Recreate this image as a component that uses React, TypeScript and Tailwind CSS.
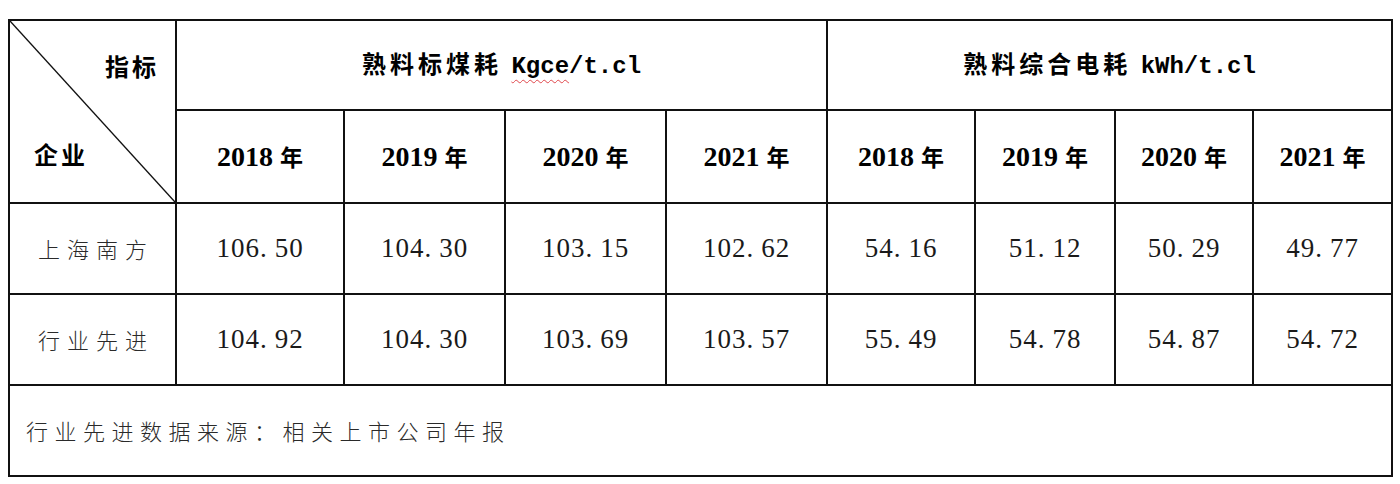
import type { ReactNode } from "react";

const cjk = "font-['Noto_Sans_CJK_SC',sans-serif]";
const serif = "font-['Liberation_Serif','Noto_Sans_CJK_SC',serif]";
const mono = "font-['Liberation_Mono','Noto_Sans_CJK_SC',monospace]";

const colWidths = [
  "w-[167px]",
  "w-[168px]",
  "w-[161px]",
  "w-[161px]",
  "w-[161px]",
  "w-[148px]",
  "w-[140px]",
  "w-[138px]",
  "w-[139px]",
];

const years = ["2018", "2019", "2020", "2021"];

const rows = [
  {
    name: "上海南方",
    values: ["106.50", "104.30", "103.15", "102.62", "54.16", "51.12", "50.29", "49.77"],
  },
  {
    name: "行业先进",
    values: ["104.92", "104.30", "103.69", "103.57", "55.49", "54.78", "54.87", "54.72"],
  },
];

const cell = "border-2 border-[#111] p-0 text-center align-middle";

const Num = ({ value }: { value: string }) => {
  const [whole, frac] = value.split(".");
  return (
    <span className={`${serif} text-[27px] text-[#1a1a1a] tracking-[1px]`}>
      {whole}
      <span className="mr-[7px]">.</span>
      {frac}
    </span>
  );
};

const Year = ({ year }: { year: string }) => (
  <span className="font-bold text-black">
    <span className={`${serif} text-[28px]`}>{year} </span>
    <span className={`${cjk} text-[23px]`}>年</span>
  </span>
);

const GroupTitle = ({ zh, unit }: { zh: string; unit: ReactNode }) => (
  <span className="font-bold text-black">
    <span className={`${cjk} text-[24px] tracking-[4px]`}>{zh}</span>
    <span className={`${mono} text-[24px]`}>{unit}</span>
  </span>
);

export default function App() {
  return (
    <div className="min-h-[484px] w-[1400px] bg-white pt-[19px] pl-[8px]">
      <table className="table-fixed border-collapse w-[1384px]">
        <colgroup>
          {colWidths.map((w, i) => (
            <col key={i} className={w} />
          ))}
        </colgroup>
        <tbody>
          <tr className="h-[90px]">
            <td rowSpan={2} className={`${cell} relative`}>
              <svg className="absolute inset-0 h-full w-full" preserveAspectRatio="none" viewBox="0 0 100 100">
                <line x1="0" y1="0" x2="100" y2="100" stroke="#111" strokeWidth="1.4" vectorEffect="non-scaling-stroke" />
              </svg>
              <div className={`${cjk} relative flex h-[176px] flex-col justify-between pt-[24px] pb-[28px] text-[24px] font-bold text-black`}>
                <span className="self-end pr-[16px] tracking-[3px]">指标</span>
                <span className="self-start pl-[24px] tracking-[3px]">企业</span>
              </div>
            </td>
            <td colSpan={4} className={cell}>
              <GroupTitle
                zh="熟料标煤耗 "
                unit={
                  <>
                    <span className="underline decoration-wavy decoration-[#e0474c] decoration-1 underline-offset-[6px]">Kgce</span>
                    /t.cl
                  </>
                }
              />
            </td>
            <td colSpan={4} className={cell}>
              <GroupTitle zh="熟料综合电耗 " unit="kWh/t.cl" />
            </td>
          </tr>
          <tr className="h-[93px]">
            {[...years, ...years].map((y, i) => (
              <td key={i} className={cell}>
                <Year year={y} />
              </td>
            ))}
          </tr>
          {rows.map((r) => (
            <tr key={r.name} className="h-[91px]">
              <td className={cell}>
                <span className={`${cjk} pl-[7px] text-[22px] font-light tracking-[7px] text-[#2a2a2a]`}>{r.name}</span>
              </td>
              {r.values.map((v, i) => (
                <td key={i} className={cell}>
                  <Num value={v} />
                </td>
              ))}
            </tr>
          ))}
          <tr className="h-[91px]">
            <td colSpan={9} className={`${cell} text-left`}>
              <span className={`${cjk} pl-[16px] text-[22px] font-light tracking-[6.5px] text-[#2a2a2a]`}>
                行业先进数据来源：相关上市公司年报
              </span>
            </td>
          </tr>
        </tbody>
      </table>
    </div>
  );
}
